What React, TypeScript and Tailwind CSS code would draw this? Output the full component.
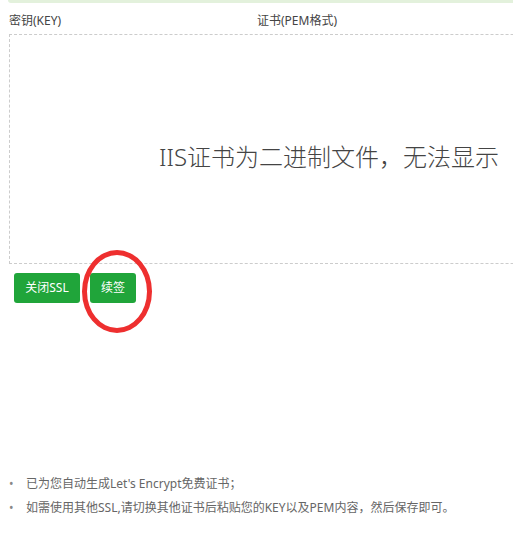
export default function App() {
  const font = { fontFamily: '"Noto Sans", "Noto Sans CJK SC", sans-serif' };
  return (
    <div className="w-[513px] h-[549px] overflow-hidden bg-white relative" style={font}>
      <div className="ml-2 h-[3px] rounded-bl-sm bg-[#e3f1dc]" />

      <div className="flex pl-[9px] pt-[10px] text-[12px] leading-[16px] text-[#444]">
        <span className="w-[248px]">密钥(KEY)</span>
        <span>证书(PEM格式)</span>
      </div>

      <div className="ml-[9px] mt-[5px] w-[640px] h-[230px] border border-dashed border-[#ccc] flex justify-center pt-[104px]">
        <p className="text-[24px] leading-[36px] font-light text-[#444]">IIS证书为二进制文件，无法显示</p>
      </div>

      <div className="flex gap-[10px] pl-[14px] mt-[9px]">
        <button className="h-[30px] w-[66px] rounded-[3px] bg-[#20a53a] text-white text-[12px]">关闭SSL</button>
        <div className="relative">
          <button className="h-[30px] w-[46px] rounded-[3px] bg-[#20a53a] text-white text-[12px]">续签</button>
          <div className="absolute left-[-8px] top-[-23px] w-[70px] h-[83px] rounded-[50%] border-[5px] border-[#ee2f2f]" />
        </div>
      </div>

      <ul className="absolute left-0 top-[472px] text-[12px] leading-[24px] text-[#666]">
        <li className="flex items-center">
          <span className="w-[26px] pl-[9px] text-[#888]">•</span>
          已为您自动生成Let's Encrypt免费证书；
        </li>
        <li className="flex items-center">
          <span className="w-[26px] pl-[9px] text-[#888]">•</span>
          如需使用其他SSL,请切换其他证书后粘贴您的KEY以及PEM内容，然后保存即可。
        </li>
      </ul>
    </div>
  );
}
